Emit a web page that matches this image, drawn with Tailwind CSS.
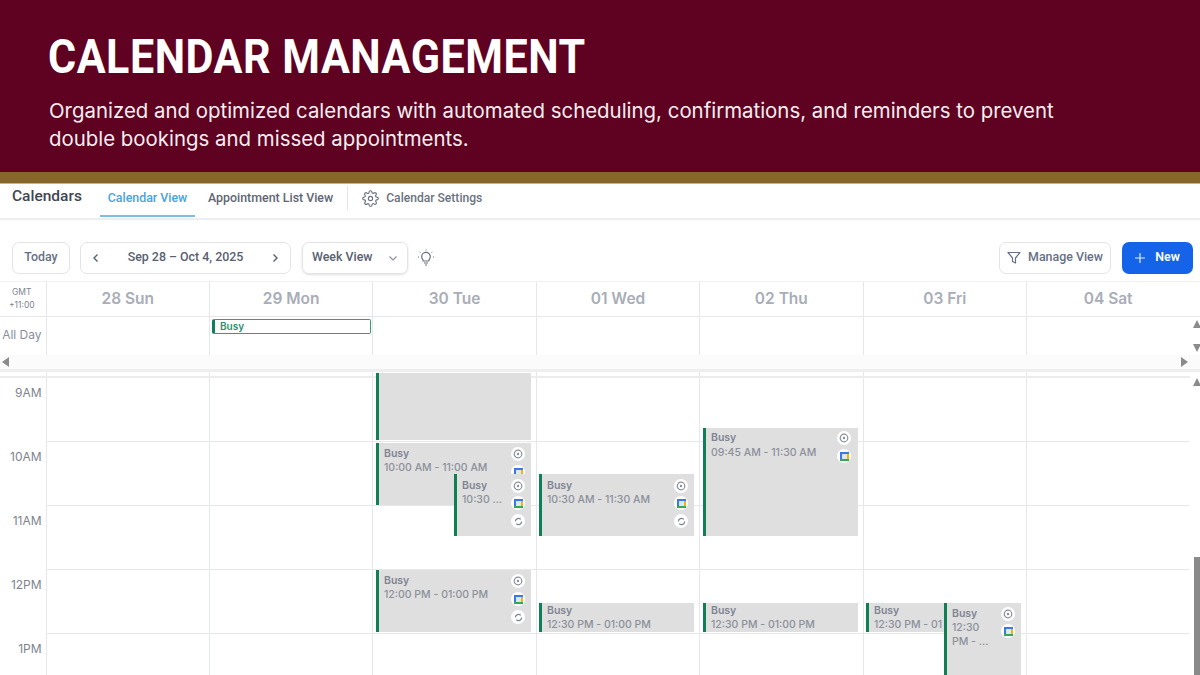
<!DOCTYPE html>
<html>
<head>
<meta charset="utf-8">
<script src="https://cdn.jsdelivr.net/npm/@tailwindcss/browser@4"></script>
</head>
<body class="m-0 bg-white">
<div class="w-[1200px] h-[675px] overflow-hidden relative font-['Inter',sans-serif] text-[#5f6673]">
  <header class="h-[172px] bg-[#5f0120] pl-[49px] text-white">
    <h1 class="pt-[30px] -ml-px origin-left scale-x-[0.896] font-['Roboto',sans-serif] font-bold text-[48px] leading-[54px] tracking-[0.6px] whitespace-nowrap">CALENDAR MANAGEMENT</h1>
    <p class="mt-[13px] text-[20.42px] leading-[28px] w-[1040px] text-[#f6eef0]">Organized and optimized calendars with automated scheduling, confirmations, and reminders to prevent double bookings and missed appointments.</p>
  </header>
  <div class="h-[12px] bg-[#87662b] border-b border-[#c9b48a]"></div>

  <nav class="h-[36px] flex items-start border-b-2 border-[#eceef0] font-['Roboto',sans-serif]">
    <span class="ml-[12px] h-[25px] flex items-center text-[15.5px] font-medium text-[#3f4652] w-[88px]">Calendars</span>
    <span class="w-[95px] h-[33px] pb-[3px] flex items-center justify-center text-[12.4px] font-medium text-[#4aa3df] border-b-2 border-[#7dbde8]"><span class="block">Calendar View</span></span>
    <span class="ml-[13px] h-[28px] flex items-center text-[12.4px] font-medium text-[#5f6673]">Appointment List View</span>
    <span class="ml-[14px] mt-[2px] w-px h-[24px] bg-[#e3e5e8]"></span>
    <svg class="ml-[14px] mt-[6px]" width="17" height="17" viewBox="0 0 24 24" fill="none" stroke="#6b7280" stroke-width="1.6"><circle cx="12" cy="12" r="3"/><path d="M19.4 15a1.65 1.65 0 0 0 .33 1.82l.06.06a2 2 0 1 1-2.83 2.83l-.06-.06a1.65 1.65 0 0 0-2.82 1.17V21a2 2 0 1 1-4 0v-.09a1.65 1.65 0 0 0-2.82-1.17l-.06.06a2 2 0 1 1-2.83-2.83l.06-.06A1.65 1.65 0 0 0 3.26 14H3a2 2 0 1 1 0-4h.09a1.65 1.65 0 0 0 1.17-2.82l-.06-.06a2 2 0 1 1 2.83-2.83l.06.06A1.65 1.65 0 0 0 10 3.17V3a2 2 0 1 1 4 0v.09a1.65 1.65 0 0 0 2.82 1.17l.06-.06a2 2 0 1 1 2.83 2.83l-.06.06A1.65 1.65 0 0 0 20.83 10H21a2 2 0 1 1 0 4h-.09a1.65 1.65 0 0 0-1.51 1z"/></svg>
    <span class="ml-[7px] h-[28px] flex items-center text-[12.1px] font-medium text-[#6b7280]">Calendar Settings</span>
  </nav>

  <div class="h-[61px] flex items-center pl-[12px] pr-[7px] pt-[14px] font-['Roboto',sans-serif] text-[12.4px] font-medium">
    <div class="w-[58px] h-[32px] flex items-center justify-center border border-[#e2e4e8] rounded-[7px] text-[#667085]">Today</div>
    <div class="ml-[10px] w-[211px] h-[32px] flex items-center justify-between px-[10px] border border-[#e2e4e8] rounded-[7px] text-[#596070]">
      <svg width="10" height="10" viewBox="0 0 10 10" fill="none" stroke="#596070" stroke-width="1.4"><path d="M6.5 1.5 3 5l3.5 3.5"/></svg>
      <span>Sep 28 – Oct 4, 2025</span>
      <svg width="10" height="10" viewBox="0 0 10 10" fill="none" stroke="#596070" stroke-width="1.4"><path d="M3.5 1.5 7 5 3.5 8.5"/></svg>
    </div>
    <div class="ml-[11px] w-[106px] h-[32px] flex items-center justify-between pl-[9px] pr-[9px] border border-[#e2e4e8] rounded-[7px] shadow-sm text-[#596070]">
      <span>Week View</span>
      <svg width="10" height="10" viewBox="0 0 10 10" fill="none" stroke="#8a909c" stroke-width="1.1"><path d="M1.5 3.5 5 7l3.5-3.5"/></svg>
    </div>
    <svg class="ml-[9px]" width="18" height="18" viewBox="0 0 18 18" fill="none" stroke="#6b7280" stroke-width="1.2"><path d="M6.2 12c0-1.6-1.5-2.2-1.5-4.3a4.3 4.3 0 0 1 8.6 0c0 2.1-1.5 2.7-1.5 4.3zM7 14h4M8 16h2"/><path d="M9 .6v1M2.600 2.800l.8.8M15.400 2.800l-.8.8M1 8h1M16 8h1" stroke-width="1"/></svg>
    <div class="ml-auto w-[112px] h-[32px] flex items-center justify-center gap-[7px] border border-[#e2e4e8] rounded-[7px] text-[#667085]">
      <svg width="14" height="14" viewBox="0 0 14 14" fill="none" stroke="#667085" stroke-width="1.2" stroke-linejoin="round"><path d="M1 1.500h12L8.500 7v5L5.500 10.500V7z"/></svg>
      <span>Manage View</span>
    </div>
    <div class="ml-[11px] w-[71px] h-[32px] flex items-center justify-center gap-[10px] rounded-[7px] bg-[#1563e8] text-white font-semibold">
      <svg width="10" height="10" viewBox="0 0 10 10" stroke="#dfe9fb" stroke-width="1.200"><path d="M5 0v10M0 5h10"/></svg>
      <span>New</span>
    </div>
  </div>

  <section class="border-t border-[#eef0f2] font-['Inter',sans-serif]">
    <div class="h-[35px] grid grid-cols-[45.6px_repeat(7,163.4px)] border-b border-[#e6e7ea]">
      <div class="flex flex-col items-center justify-center pr-[2px] text-[8.5px] leading-[13px] text-[#7d8490]"><span>GMT</span><span>+11:00</span></div>
      <div class="border-l border-[#e6e7ea] flex items-center justify-center text-[15.5px] font-semibold text-[#a8adb8]">28 Sun</div>
      <div class="border-l border-[#e6e7ea] flex items-center justify-center text-[15.5px] font-semibold text-[#a8adb8]">29 Mon</div>
      <div class="border-l border-[#e6e7ea] flex items-center justify-center text-[15.5px] font-semibold text-[#a8adb8]">30 Tue</div>
      <div class="border-l border-[#e6e7ea] flex items-center justify-center text-[15.5px] font-semibold text-[#a8adb8]">01 Wed</div>
      <div class="border-l border-[#e6e7ea] flex items-center justify-center text-[15.5px] font-semibold text-[#a8adb8]">02 Thu</div>
      <div class="border-l border-[#e6e7ea] flex items-center justify-center text-[15.5px] font-semibold text-[#a8adb8]">03 Fri</div>
      <div class="border-l border-[#e6e7ea] flex items-center justify-center text-[15.5px] font-semibold text-[#a8adb8]">04 Sat</div>
    </div>
    <div class="h-[38px] grid grid-cols-[45.6px_repeat(7,163.4px)]">
      <div class="flex items-center justify-end pr-[4px] pb-[2px] text-[12px] text-[#8a909c]">All Day</div>
      <div class="border-l border-[#e6e7ea]"></div>
      <div class="border-l border-[#e6e7ea] pt-[2px] pl-[2px] pr-[1px]">
        <div class="h-[15px] border border-[#3c9a76] border-l-[3px] border-l-[#0f7f55] rounded-[2px] pl-[5px] text-[10px] leading-[12px] font-semibold text-[#2f8f6b]">Busy</div>
      </div>
      <div class="border-l border-[#e6e7ea]"></div>
      <div class="border-l border-[#e6e7ea]"></div>
      <div class="border-l border-[#e6e7ea]"></div>
      <div class="border-l border-[#e6e7ea]"></div>
      <div class="border-l border-[#e6e7ea]"></div>
    </div>
    <div class="h-[14px] bg-[#fbfbfb] flex items-center justify-between pl-[2px] pr-[11px]">
      <svg width="8" height="10" viewBox="0 0 8 10" fill="#8b8b8b"><path d="M7 0v10L0 5z"/></svg>
      <svg width="8" height="10" viewBox="0 0 8 10" fill="#8b8b8b"><path d="M0 0v10l7-5z"/></svg>
    </div>
    <div class="h-[3px] bg-[#eeeeee]"></div>
    <div class="h-[6px] w-[1190px] border-b-2 border-[#ececec] grid grid-cols-[45.6px_repeat(7,163.4px)]">
      <div></div>
      <div class="border-l border-[#e6e7ea]"></div>
      <div class="border-l border-[#e6e7ea]"></div>
      <div class="border-l border-[#e6e7ea]"></div>
      <div class="border-l border-[#e6e7ea]"></div>
      <div class="border-l border-[#e6e7ea]"></div>
      <div class="border-l border-[#e6e7ea]"></div>
      <div class="border-l border-[#e6e7ea]"></div>
    </div>

    <div class="w-[1190px] h-[298px] grid grid-cols-[45.6px_repeat(7,163.4px)] grid-rows-[64px_64px_64px_64px_64px] text-[12px] text-[#7d8490]">
      <div class="text-right pr-[4px] pt-[6px]">9AM</div><div class="border-l border-b border-[#e6e7ea]"></div><div class="border-l border-b border-[#e6e7ea]"></div><div class="border-l border-b border-[#e6e7ea]"></div><div class="border-l border-b border-[#e6e7ea]"></div><div class="border-l border-b border-[#e6e7ea]"></div><div class="border-l border-b border-[#e6e7ea]"></div><div class="border-l border-b border-[#e6e7ea]"></div>
      <div class="text-right pr-[4px] pt-[6px]">10AM</div><div class="border-l border-b border-[#e6e7ea]"></div><div class="border-l border-b border-[#e6e7ea]"></div><div class="border-l border-b border-[#e6e7ea]"></div><div class="border-l border-b border-[#e6e7ea]"></div><div class="border-l border-b border-[#e6e7ea]"></div><div class="border-l border-b border-[#e6e7ea]"></div><div class="border-l border-b border-[#e6e7ea]"></div>
      <div class="text-right pr-[4px] pt-[6px]">11AM</div><div class="border-l border-b border-[#e6e7ea]"></div><div class="border-l border-b border-[#e6e7ea]"></div><div class="border-l border-b border-[#e6e7ea]"></div><div class="border-l border-b border-[#e6e7ea]"></div><div class="border-l border-b border-[#e6e7ea]"></div><div class="border-l border-b border-[#e6e7ea]"></div><div class="border-l border-b border-[#e6e7ea]"></div>
      <div class="text-right pr-[4px] pt-[6px]">12PM</div><div class="border-l border-b border-[#e6e7ea]"></div><div class="border-l border-b border-[#e6e7ea]"></div><div class="border-l border-b border-[#e6e7ea]"></div><div class="border-l border-b border-[#e6e7ea]"></div><div class="border-l border-b border-[#e6e7ea]"></div><div class="border-l border-b border-[#e6e7ea]"></div><div class="border-l border-b border-[#e6e7ea]"></div>
      <div class="text-right pr-[4px] pt-[6px]">1PM</div><div class="border-l border-[#e6e7ea]"></div><div class="border-l border-[#e6e7ea]"></div><div class="border-l border-[#e6e7ea]"></div><div class="border-l border-[#e6e7ea]"></div><div class="border-l border-[#e6e7ea]"></div><div class="border-l border-[#e6e7ea]"></div><div class="border-l border-[#e6e7ea]"></div>
    </div>
  </section>

  <!-- scrollbar -->
  <svg class="absolute left-[1193px] top-[320px]" width="7" height="8" viewBox="0 0 7 8" fill="#8b8b8b"><path d="M4 0l4 8H0z"/></svg>
  <svg class="absolute left-[1193px] top-[344px]" width="7" height="8" viewBox="0 0 7 8" fill="#8b8b8b"><path d="M0 0h8L4 8z"/></svg>
  <svg class="absolute left-[1193px] top-[378px]" width="7" height="8" viewBox="0 0 7 8" fill="#8b8b8b"><path d="M4 0l4 8H0z"/></svg>
  <div class="absolute left-[1194px] top-[557px] w-[6px] h-[118px] bg-[#8a8a8a]"></div>

  <!-- events -->
  <div class="absolute left-[376px] top-[373px] w-[155px] h-[67px] bg-[#dfdfdf] border-l-[3px] border-[#0f7f55]"></div>

  <div class="absolute left-[376px] top-[443px] w-[155px] h-[62px] bg-[#dfdfdf] border-l-[3px] border-[#0f7f55] pl-[5px] pt-[4px] text-[10.5px] leading-[14px] text-[#8b909b] font-medium">
    <div class="font-semibold text-[#7f8592]">Busy</div>
    <div>10:00 AM - 11:00 AM</div>
    <span class="absolute left-[132px] top-[4px] w-[14px] h-[14px] rounded-full bg-white flex items-center justify-center"><svg width="10" height="10" viewBox="0 0 10 10" fill="none" stroke="#8b909b" stroke-width="1.200"><circle cx="5" cy="5" r="3.800"/><circle cx="5" cy="5" r="1.200" fill="#8b909b" stroke="none"/></svg></span>
    <span class="absolute left-[132px] top-[22px] w-[14px] h-[14px] rounded-full bg-white flex items-center justify-center"><svg width="9" height="9" viewBox="0 0 9 9"><path fill="#3b78e7" d="M0 0h9v2H2v5H0z"/><path fill="#f4b400" d="M7 2h2v5H7z"/><path fill="#34a853" d="M0 7h9v2H0z"/><path fill="#dbe7fb" d="M2 2h5v5H2z"/></svg></span>
  </div>

  <div class="absolute left-[454px] top-[474px] w-[77px] h-[62px] bg-[#dfdfdf] border-l-[3px] border-[#0f7f55] pl-[5px] pt-[5px] text-[10.5px] leading-[14px] text-[#8b909b] font-medium">
    <div class="font-semibold text-[#7f8592]">Busy</div>
    <div>10:30 ...</div>
    <span class="absolute left-[54px] top-[5px] w-[14px] h-[14px] rounded-full bg-white flex items-center justify-center"><svg width="10" height="10" viewBox="0 0 10 10" fill="none" stroke="#8b909b" stroke-width="1.200"><circle cx="5" cy="5" r="3.800"/><circle cx="5" cy="5" r="1.200" fill="#8b909b" stroke="none"/></svg></span>
    <span class="absolute left-[54px] top-[22px] w-[14px] h-[14px] rounded-full bg-white flex items-center justify-center"><svg width="9" height="9" viewBox="0 0 9 9"><path fill="#3b78e7" d="M0 0h9v2H2v5H0z"/><path fill="#f4b400" d="M7 2h2v5H7z"/><path fill="#34a853" d="M0 7h9v2H0z"/><path fill="#dbe7fb" d="M2 2h5v5H2z"/></svg></span>
    <span class="absolute left-[54px] top-[40px] w-[14px] h-[14px] rounded-full bg-white flex items-center justify-center"><svg width="9" height="9" viewBox="0 0 10 10" fill="none" stroke="#7f8592" stroke-width="1.300"><path d="M1.500 5a3.500 3.500 0 0 1 6-2.400M8.500 5a3.500 3.500 0 0 1-6 2.400"/></svg></span>
  </div>

  <div class="absolute left-[539px] top-[474px] w-[155px] h-[62px] bg-[#dfdfdf] border-l-[3px] border-[#0f7f55] pl-[5px] pt-[5px] text-[10.5px] leading-[14px] text-[#8b909b] font-medium">
    <div class="font-semibold text-[#7f8592]">Busy</div>
    <div>10:30 AM - 11:30 AM</div>
    <span class="absolute left-[132px] top-[5px] w-[14px] h-[14px] rounded-full bg-white flex items-center justify-center"><svg width="10" height="10" viewBox="0 0 10 10" fill="none" stroke="#8b909b" stroke-width="1.200"><circle cx="5" cy="5" r="3.800"/><circle cx="5" cy="5" r="1.200" fill="#8b909b" stroke="none"/></svg></span>
    <span class="absolute left-[132px] top-[22px] w-[14px] h-[14px] rounded-full bg-white flex items-center justify-center"><svg width="9" height="9" viewBox="0 0 9 9"><path fill="#3b78e7" d="M0 0h9v2H2v5H0z"/><path fill="#f4b400" d="M7 2h2v5H7z"/><path fill="#34a853" d="M0 7h9v2H0z"/><path fill="#dbe7fb" d="M2 2h5v5H2z"/></svg></span>
    <span class="absolute left-[132px] top-[40px] w-[14px] h-[14px] rounded-full bg-white flex items-center justify-center"><svg width="9" height="9" viewBox="0 0 10 10" fill="none" stroke="#7f8592" stroke-width="1.300"><path d="M1.500 5a3.500 3.500 0 0 1 6-2.400M8.500 5a3.500 3.500 0 0 1-6 2.400"/></svg></span>
  </div>

  <div class="absolute left-[703px] top-[428px] w-[155px] h-[108px] bg-[#dfdfdf] border-l-[3px] border-[#0f7f55] pl-[5px] pt-[2px] text-[10.5px] leading-[15px] text-[#8b909b] font-medium">
    <div class="font-semibold text-[#7f8592]">Busy</div>
    <div>09:45 AM - 11:30 AM</div>
    <span class="absolute left-[131px] top-[3px] w-[14px] h-[14px] rounded-full bg-white flex items-center justify-center"><svg width="10" height="10" viewBox="0 0 10 10" fill="none" stroke="#8b909b" stroke-width="1.200"><circle cx="5" cy="5" r="3.800"/><circle cx="5" cy="5" r="1.200" fill="#8b909b" stroke="none"/></svg></span>
    <span class="absolute left-[131px] top-[21px] w-[14px] h-[14px] rounded-full bg-white flex items-center justify-center"><svg width="9" height="9" viewBox="0 0 9 9"><path fill="#3b78e7" d="M0 0h9v2H2v5H0z"/><path fill="#f4b400" d="M7 2h2v5H7z"/><path fill="#34a853" d="M0 7h9v2H0z"/><path fill="#dbe7fb" d="M2 2h5v5H2z"/></svg></span>
  </div>

  <div class="absolute left-[376px] top-[570px] w-[155px] h-[62px] bg-[#dfdfdf] border-l-[3px] border-[#0f7f55] pl-[5px] pt-[4px] text-[10.5px] leading-[14px] text-[#8b909b] font-medium">
    <div class="font-semibold text-[#7f8592]">Busy</div>
    <div>12:00 PM - 01:00 PM</div>
    <span class="absolute left-[132px] top-[4px] w-[14px] h-[14px] rounded-full bg-white flex items-center justify-center"><svg width="10" height="10" viewBox="0 0 10 10" fill="none" stroke="#8b909b" stroke-width="1.200"><circle cx="5" cy="5" r="3.800"/><circle cx="5" cy="5" r="1.200" fill="#8b909b" stroke="none"/></svg></span>
    <span class="absolute left-[132px] top-[22px] w-[14px] h-[14px] rounded-full bg-white flex items-center justify-center"><svg width="9" height="9" viewBox="0 0 9 9"><path fill="#3b78e7" d="M0 0h9v2H2v5H0z"/><path fill="#f4b400" d="M7 2h2v5H7z"/><path fill="#34a853" d="M0 7h9v2H0z"/><path fill="#dbe7fb" d="M2 2h5v5H2z"/></svg></span>
    <span class="absolute left-[132px] top-[40px] w-[14px] h-[14px] rounded-full bg-white flex items-center justify-center"><svg width="9" height="9" viewBox="0 0 10 10" fill="none" stroke="#7f8592" stroke-width="1.300"><path d="M1.500 5a3.500 3.500 0 0 1 6-2.400M8.500 5a3.500 3.500 0 0 1-6 2.400"/></svg></span>
  </div>

  <div class="absolute left-[539px] top-[603px] w-[155px] h-[29px] overflow-hidden bg-[#dfdfdf] border-l-[3px] border-[#0f7f55] pl-[5px] pt-px text-[10.5px] leading-[13.500px] text-[#8b909b] font-medium">
    <div class="font-semibold text-[#7f8592]">Busy</div>
    <div>12:30 PM - 01:00 PM</div>
  </div>
  <div class="absolute left-[703px] top-[603px] w-[155px] h-[29px] overflow-hidden bg-[#dfdfdf] border-l-[3px] border-[#0f7f55] pl-[5px] pt-px text-[10.5px] leading-[13.500px] text-[#8b909b] font-medium">
    <div class="font-semibold text-[#7f8592]">Busy</div>
    <div>12:30 PM - 01:00 PM</div>
  </div>
  <div class="absolute left-[866px] top-[603px] w-[78px] h-[29px] overflow-hidden whitespace-nowrap bg-[#dfdfdf] border-l-[3px] border-[#0f7f55] pl-[5px] pt-px text-[10.5px] leading-[13.500px] text-[#8b909b] font-medium">
    <div class="font-semibold text-[#7f8592]">Busy</div>
    <div>12:30 PM - 01</div>
  </div>
  <div class="absolute left-[944px] top-[603px] w-[77px] h-[72px] bg-[#dfdfdf] border-l-[3px] border-[#0f7f55] pl-[5px] pt-[4px] text-[10.5px] leading-[14px] text-[#8b909b] font-medium">
    <div class="font-semibold text-[#7f8592]">Busy</div>
    <div class="w-[42px]">12:30 PM - ...</div>
    <span class="absolute left-[54px] top-[4px] w-[14px] h-[14px] rounded-full bg-white flex items-center justify-center"><svg width="10" height="10" viewBox="0 0 10 10" fill="none" stroke="#8b909b" stroke-width="1.200"><circle cx="5" cy="5" r="3.800"/><circle cx="5" cy="5" r="1.200" fill="#8b909b" stroke="none"/></svg></span>
    <span class="absolute left-[54px] top-[21px] w-[14px] h-[14px] rounded-full bg-white flex items-center justify-center"><svg width="9" height="9" viewBox="0 0 9 9"><path fill="#3b78e7" d="M0 0h9v2H2v5H0z"/><path fill="#f4b400" d="M7 2h2v5H7z"/><path fill="#34a853" d="M0 7h9v2H0z"/><path fill="#dbe7fb" d="M2 2h5v5H2z"/></svg></span>
  </div>
</div>
</body>
</html>
